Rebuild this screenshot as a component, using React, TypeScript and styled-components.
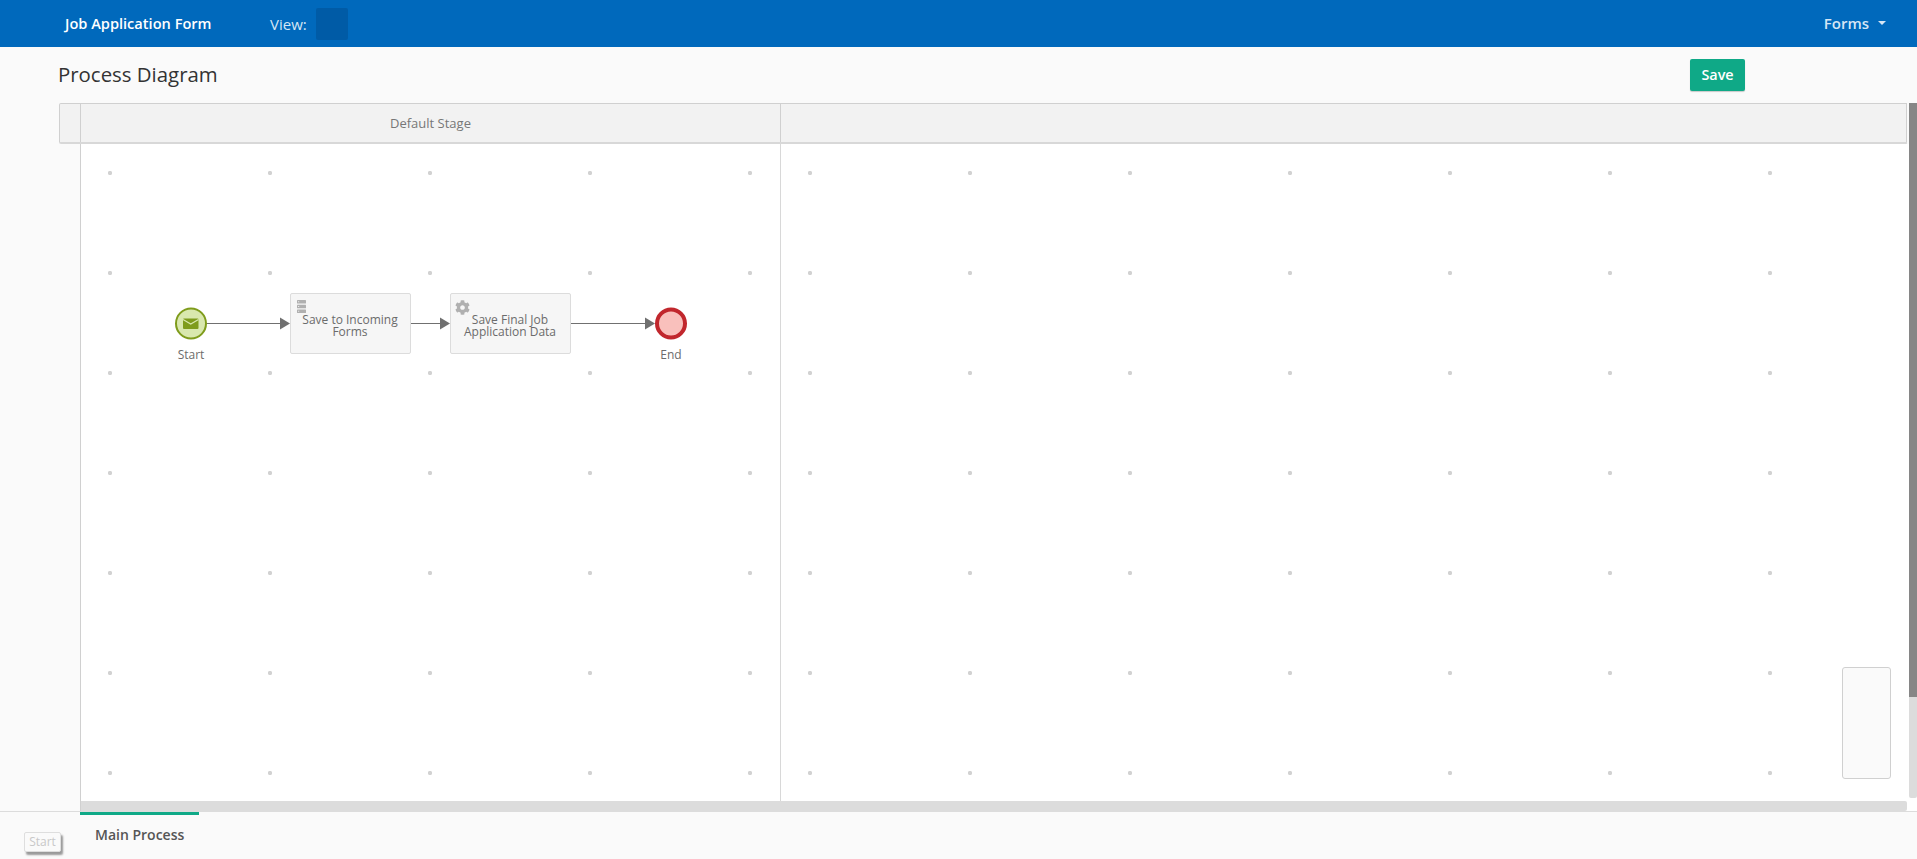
import React from "react";
import styled, { createGlobalStyle } from "styled-components";
import { FaCog } from "react-icons/fa";

const GlobalStyle = createGlobalStyle`
  html, body {
    margin: 0;
    padding: 0;
    height: 100%;
    overflow: hidden;
    background: #fafafa;
    font-family: "Open Sans", "Noto Sans", sans-serif;
  }
`;

const Page = styled.div`
  display: flex;
  flex-direction: column;
  height: 859px;
  position: relative;
`;

const TopBar = styled.header`
  display: flex;
  align-items: center;
  height: 47px;
  background: #0069bc;
  padding: 0 31px 0 65px;
  flex: none;
`;

const Brand = styled.div`
  width: 205px;
  margin-top: -1px;
  color: #fff;
  font-size: 14.6px;
  font-weight: 600;
`;

const ViewLabel = styled.span`
  color: #d5e6f5;
  font-size: 15px;
  margin-right: 9px;
`;

const ViewBox = styled.div`
  width: 32px;
  height: 32px;
  border-radius: 2px;
  background: #005ba6;
`;

const FormsMenu = styled.div`
  margin-left: auto;
  margin-top: -1px;
  display: flex;
  align-items: center;
  gap: 9px;
  color: #d5e6f5;
  font-size: 15px;
  font-weight: 600;
`;

const Caret = styled.span`
  width: 0;
  height: 0;
  border-left: 4px solid transparent;
  border-right: 4px solid transparent;
  border-top: 4.5px solid #d5e6f5;
`;

const TitleRow = styled.div`
  display: flex;
  align-items: center;
  height: 56px;
  padding: 0 172px 0 58px;
  flex: none;
`;

const Title = styled.h1`
  margin: 0 0 2px;
  color: #333;
  font-size: 20.4px;
  font-weight: 400;
`;

const SaveButton = styled.button`
  margin-left: auto;
  width: 55px;
  height: 32px;
  border: none;
  border-radius: 2px;
  background: #0fa987;
  box-shadow: 0 1px 1px rgba(0, 0, 0, 0.2);
  color: #fff;
  font-family: inherit;
  font-size: 14.4px;
  font-weight: 600;
  padding: 0 0 2px;
`;

const Designer = styled.div`
  display: flex;
  height: 708px;
  flex: none;
`;

const Sheet = styled.div`
  width: 1850px;
  margin-left: 59px;
  display: flex;
  flex-direction: column;
`;

const StageBar = styled.div`
  display: flex;
  height: 41px;
  box-sizing: border-box;
  margin-right: 2px;
  background: #f2f2f2;
  border: 1px solid #d0d0d0;
  border-bottom: 2px solid #d8d8d8;
  border-radius: 2px 0 0 2px;
  flex: none;
`;

const LaneCorner = styled.div`
  width: 21px;
  box-sizing: border-box;
  border-right: 1px solid #d0d0d0;
  flex: none;
`;

const StageCell = styled.div<{ $wide?: boolean }>`
  display: flex;
  align-items: center;
  justify-content: center;
  box-sizing: border-box;
  color: #777;
  font-size: 13px;
  ${(p) => (p.$wide ? "flex: 1;" : "width: 700px; border-right: 1px solid #d0d0d0;")}
`;

const CanvasRow = styled.div`
  display: flex;
  flex: 1;
  min-height: 0;
`;

const LaneGutter = styled.div`
  width: 22px;
  flex: none;
`;

const Canvas = styled.div`
  position: relative;
  flex: 1;
  display: flex;
  flex-direction: column;
  background: #fff;
  border-left: 1px solid #d0d0d0;
  margin-left: -1px;
`;

const Lanes = styled.div`
  display: flex;
  flex: 1;
  min-height: 0;
`;

const Lane = styled.div<{ $first?: boolean }>`
  box-sizing: border-box;
  background-image: radial-gradient(circle, #d2d2d2 0, #d2d2d2 1.8px, transparent 2.5px);
  background-size: 160px 100px;
  background-position: -51px -21px;
  ${(p) => (p.$first ? "width: 700px; border-right: 1px solid #d8d8d8;" : "flex: 1;")}
`;

const HScroll = styled.div`
  height: 10px;
  flex: none;
  background: #dcdcdc;
  border-radius: 0 2px 2px 0;
  margin-right: 2px;
`;

const VColumn = styled.div`
  width: 8px;
  flex: none;
  background: #fff;
`;

const VScroll = styled.div`
  height: 695px;
  background: #dcdcdc;
  border-radius: 0 0 2px 2px;
`;

const VThumb = styled.div`
  height: 594px;
  background: #868686;
`;

const Minimap = styled.div`
  position: absolute;
  right: 18px;
  bottom: 32px;
  width: 49px;
  height: 112px;
  box-sizing: border-box;
  background: #fafafa;
  border: 1px solid #d0d0d0;
  border-radius: 3px;
`;

const Wires = styled.svg`
  position: absolute;
  left: 0;
  top: 0;
  pointer-events: none;
`;

const TaskBox = styled.div<{ $x: number }>`
  position: absolute;
  left: ${(p) => p.$x}px;
  top: 149px;
  width: 121px;
  height: 61px;
  box-sizing: border-box;
  background: #f6f6f6;
  border: 1px solid #dcdcdc;
  border-radius: 2px;
  padding: 20px 8.5px 0 7.5px;
  color: #6b6b6b;
  font-size: 12px;
  line-height: 12px;
  text-align: center;
`;

const StackIcon = styled.svg`
  position: absolute;
  left: 6px;
  top: 6px;
`;

const GearIcon = styled(FaCog)`
  position: absolute;
  left: 4px;
  top: 6px;
  width: 15px;
  height: 15px;
  color: #b0b0b0;
`;

const EventLabel = styled.div<{ $x: number }>`
  position: absolute;
  left: ${(p) => p.$x - 30}px;
  top: 203px;
  width: 60px;
  color: #6b6b6b;
  font-size: 12px;
  line-height: 16px;
  text-align: center;
`;

const TabBar = styled.div`
  flex: 1;
  display: flex;
  padding-left: 80px;
  border-top: 1px solid #dcdcdc;
`;

const Tab = styled.div`
  width: 119px;
  height: 100%;
  box-sizing: border-box;
  border-top: 3px solid #0fa987;
  padding: 10px 0 0 15px;
  color: #555;
  font-size: 14px;
  font-weight: 600;
  line-height: 20px;
`;

const DragGhost = styled.div`
  position: absolute;
  left: 24px;
  top: 832px;
  width: 37px;
  height: 20px;
  box-sizing: border-box;
  border: 1px solid #dedede;
  border-radius: 2px;
  background: #fafafa;
  box-shadow: 2px 3px 2px #999;
  color: #c8c8c8;
  font-size: 12px;
  line-height: 18px;
  text-align: center;
`;

export default function App() {
  return (
    <Page>
      <GlobalStyle />
      <TopBar>
        <Brand>Job Application Form</Brand>
        <ViewLabel>View:</ViewLabel>
        <ViewBox />
        <FormsMenu>
          Forms
          <Caret />
        </FormsMenu>
      </TopBar>
      <TitleRow>
        <Title>Process Diagram</Title>
        <SaveButton>Save</SaveButton>
      </TitleRow>
      <Designer>
        <Sheet>
          <StageBar>
            <LaneCorner />
            <StageCell>Default Stage</StageCell>
            <StageCell $wide />
          </StageBar>
          <CanvasRow>
            <LaneGutter />
            <Canvas>
              <Lanes>
                <Lane $first />
                <Lane />
              </Lanes>
              <HScroll />
              <Wires width="620" height="230">
                <g stroke="#707070" strokeWidth="1" fill="#707070">
                  <line x1="126" y1="179.5" x2="200" y2="179.5" />
                  <polygon points="199,173.5 209,179.5 199,185.5" stroke="none" />
                  <line x1="330" y1="179.5" x2="360" y2="179.5" />
                  <polygon points="359,173.5 369,179.5 359,185.5" stroke="none" />
                  <line x1="490" y1="179.5" x2="565" y2="179.5" />
                  <polygon points="564,173.5 574,179.5 564,185.5" stroke="none" />
                </g>
                <circle cx="110" cy="179.5" r="15" fill="#d9e8ae" stroke="#7f9c1c" strokeWidth="2" />
                <rect x="102" y="174.5" width="15.5" height="10.5" rx="1" fill="#7f9c1c" />
                <path d="M102 175.5l7.75 4.5 7.75-4.5" fill="none" stroke="#d9e8ae" strokeWidth="1.2" />
                <circle cx="590" cy="179.5" r="14" fill="#f9c0bc" stroke="#c1272d" strokeWidth="4" />
              </Wires>
              <TaskBox $x={209}>
                <StackIcon width="9" height="14" viewBox="0 0 9 14">
                  <g fill="#b0b0b0">
                    <rect x="0" y="0" width="9" height="3.6" rx="0.5" />
                    <rect x="0" y="4.7" width="9" height="3.6" rx="0.5" />
                    <rect x="0" y="9.4" width="9" height="3.6" rx="0.5" />
                  </g>
                  <g fill="#f6f6f6">
                    <rect x="1" y="1.4" width="1.2" height="0.8" />
                    <rect x="1" y="6.1" width="1.2" height="0.8" />
                    <rect x="1" y="10.8" width="1.2" height="0.8" />
                  </g>
                </StackIcon>
                Save to Incoming Forms
              </TaskBox>
              <TaskBox $x={369}>
                <GearIcon />
                Save Final Job Application Data
              </TaskBox>
              <EventLabel $x={110}>Start</EventLabel>
              <EventLabel $x={590}>End</EventLabel>
              <Minimap />
            </Canvas>
          </CanvasRow>
        </Sheet>
        <VColumn>
          <VScroll>
            <VThumb />
          </VScroll>
        </VColumn>
      </Designer>
      <TabBar>
        <Tab>Main Process</Tab>
      </TabBar>
      <DragGhost>Start</DragGhost>
    </Page>
  );
}
